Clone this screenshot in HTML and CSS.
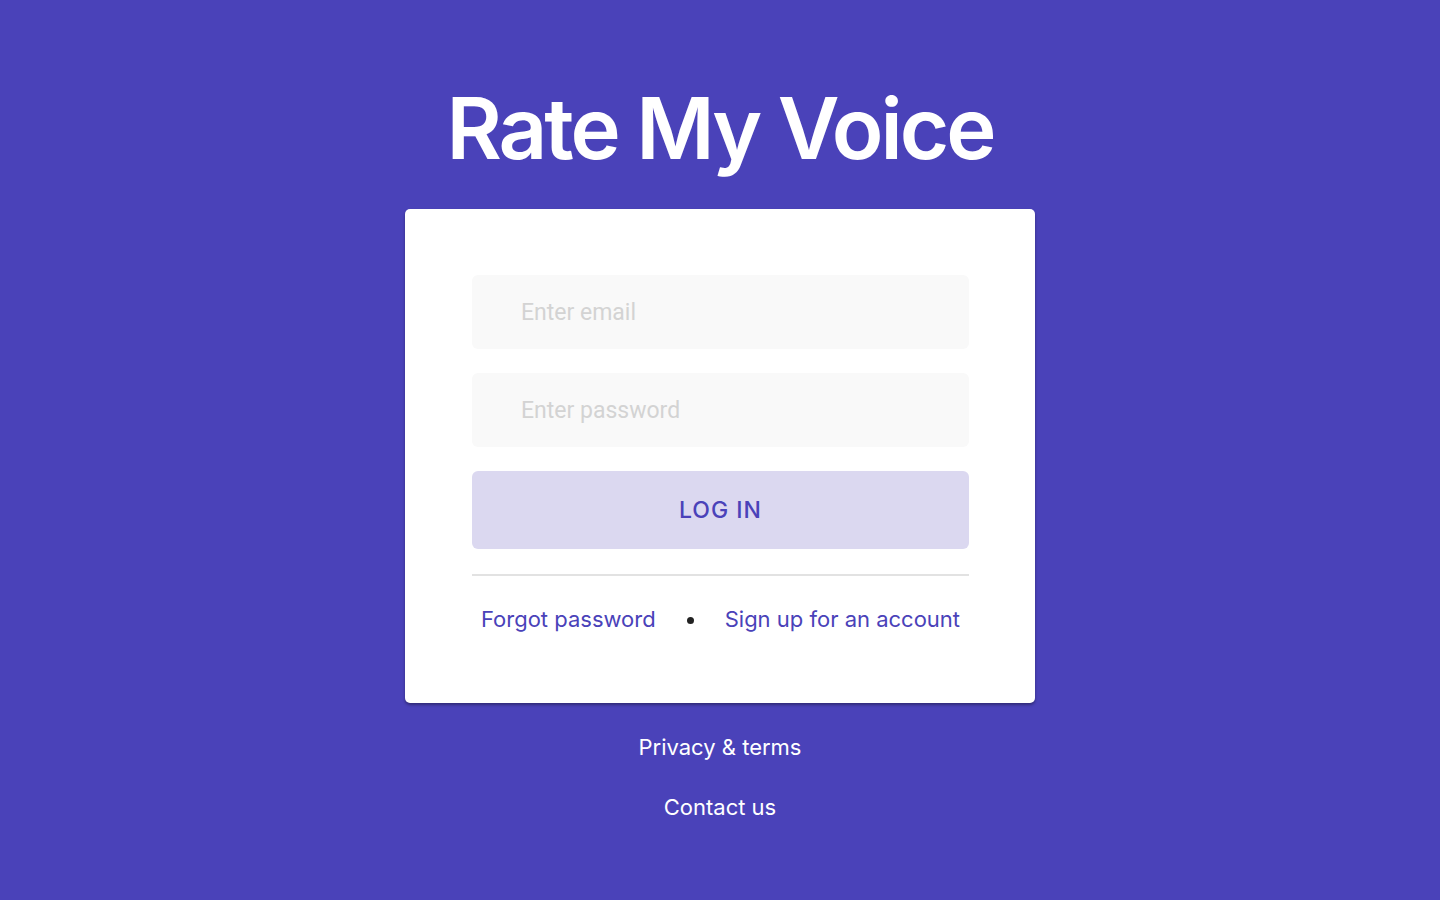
FILE: index.html
```html
<!DOCTYPE html>
<html>
<head>
<meta charset="utf-8">
<link rel="stylesheet" href="styles.css">
</head>
<body>
<main class="page">
  <h1 class="title">Rate My Voice</h1>
  <section class="card">
    <div class="field"><input class="input" type="email" placeholder="Enter email"></div>
    <div class="field"><input class="input" type="password" placeholder="Enter password"></div>
    <button class="btn">LOG IN</button>
    <hr class="divider">
    <div class="links">
      <a class="link" href="#">Forgot password</a>
      <span class="dot"></span>
      <a class="link" href="#">Sign up for an account</a>
    </div>
  </section>
  <nav class="footer">
    <a class="foot-link" href="#">Privacy &amp; terms</a>
    <a class="foot-link" href="#">Contact us</a>
  </nav>
</main>
</body>
</html>
```
FILE: styles.css
```css
* { box-sizing: border-box; }
html, body { margin: 0; padding: 0; }
body {
  background: #4a42b9;
  font-family: Inter, "Noto Sans", sans-serif;
  min-height: 900px;
}
.page {
  display: flex;
  flex-direction: column;
  align-items: center;
  padding-top: 76px;
}
.title {
  margin: 0;
  color: #fff;
  font-size: 85px;
  font-weight: 600;
  line-height: 106px;
  letter-spacing: -3px;
}
.card {
  margin-top: 27px;
  width: 630px;
  background: #fff;
  border-radius: 5px;
  box-shadow: 0 2px 3px rgba(0,0,0,0.35);
  padding: 66px 66px 0 67px;
  height: 494px;
  display: flex;
  flex-direction: column;
}
.field { margin-bottom: 24px; }
.input {
  display: block;
  width: 497px;
  height: 74px;
  border: none;
  outline: none;
  background: #f9f9f9;
  border-radius: 6px;
  padding: 0 0 0 49px;
  font-family: Roboto, sans-serif;
  font-size: 23px;
  color: #333;
}
.input::placeholder { color: #d3d3d3; }
.btn {
  width: 497px;
  height: 78px;
  border: none;
  border-radius: 6px;
  background: #dbd8f0;
  color: #4a42b9;
  font-family: Inter, sans-serif;
  font-size: 23px;
  font-weight: 500;
  letter-spacing: 1px;
  padding: 0;
}
.divider {
  margin: 25px 0 0;
  width: 497px;
  border: none;
  border-top: 2px solid #e2e2e2;
}
.links {
  width: 497px;
  display: flex;
  justify-content: center;
  align-items: center;
  gap: 31px;
  margin-top: 15px;
  height: 56px;
  white-space: nowrap;
}
.link {
  color: #4a42b9;
  text-decoration: none;
  font-size: 22px;
}
.dot {
  flex: none;
  width: 7px;
  height: 7px;
  border-radius: 50%;
  background: #222;
  margin-top: 2px;
}
.footer {
  display: flex;
  flex-direction: column;
  align-items: center;
  gap: 31px;
  margin-top: 30px;
}
.foot-link {
  color: #fff;
  text-decoration: none;
  font-size: 22px;
  line-height: 29px;
}
```
